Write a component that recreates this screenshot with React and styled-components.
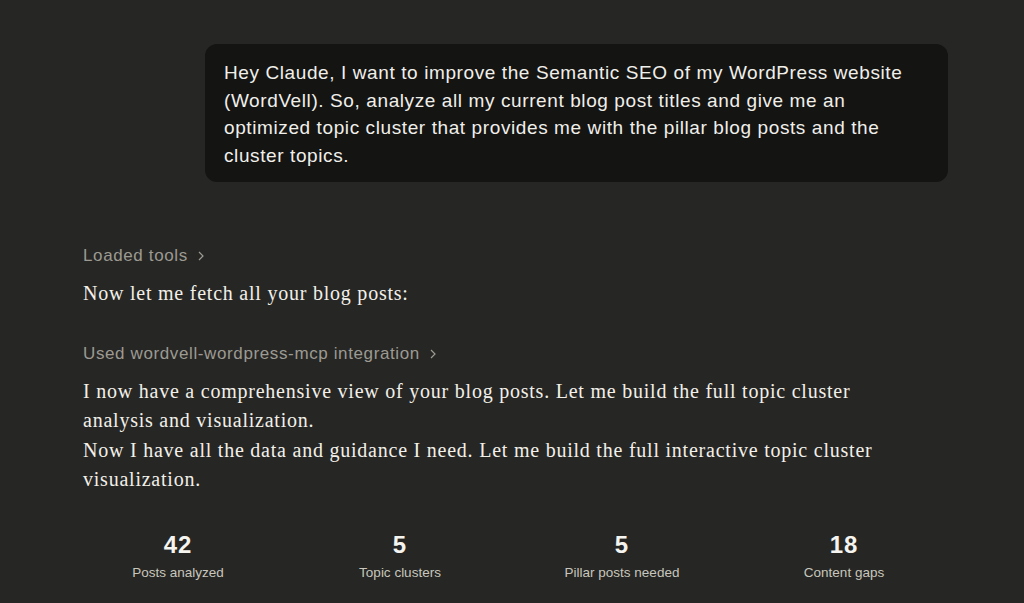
import React from "react";
import styled, { createGlobalStyle } from "styled-components";

const Global = createGlobalStyle`
	html, body { margin: 0; padding: 0; background: #262624; }
	body { width: 1024px; height: 603px; overflow: hidden; }
`;

const Page = styled.div`
	width: 1024px;
	height: 603px;
	background: #262624;
	padding-top: 44px;
	box-sizing: border-box;
`;

const Thread = styled.div`
	width: 888px;
	margin-left: 67px;
	display: flex;
	flex-direction: column;
`;

const UserRow = styled.div`
	display: flex;
	justify-content: flex-end;
	margin-right: 7px;
`;

const UserBubble = styled.div`
	width: 743px;
	box-sizing: border-box;
	background: #141413;
	border-radius: 12px;
	padding: 15px 19px 12px 19px;
	color: #f0efea;
	font-family: "Liberation Sans", Arial, sans-serif;
	font-size: 19px;
	letter-spacing: 0.6px;
	line-height: 27.7px;
`;

const Assistant = styled.div`
	padding: 0 16px;
	margin-top: 62px;
	display: flex;
	flex-direction: column;
`;

const ToolLine = styled.div`
	display: flex;
	align-items: center;
	gap: 8px;
	color: #9c9a92;
	font-family: "Liberation Sans", Arial, sans-serif;
	font-size: 17px;
	letter-spacing: 0.62px;
	line-height: 24px;
	margin-top: ${p => p.$top || 0}px;
`;

const Prose = styled.p`
	margin: ${p => p.$top || 0}px 0 0 0;
	max-width: 820px;
	color: #f2f0e9;
	font-family: "Liberation Serif", "Times New Roman", serif;
	font-size: 20px;
	letter-spacing: 0.77px;
	line-height: 29.3px;
`;

const Stats = styled.div`
	display: grid;
	grid-template-columns: repeat(4, 1fr);
	margin-top: 36px;
`;

const Stat = styled.div`
	display: flex;
	flex-direction: column;
	align-items: center;
	font-family: "Liberation Sans", Arial, sans-serif;
`;

const Num = styled.div`
	color: #f5f4ef;
	font-size: 24px;
	font-weight: 700;
	letter-spacing: 1px;
	line-height: 30px;
`;

const Label = styled.div`
	color: #c8c6bd;
	font-size: 13.5px;
	line-height: 18px;
	margin-top: 4px;
`;

const Chevron = () => (
	<svg width="10" height="12" viewBox="0 0 10 12" fill="none" stroke="currentColor" strokeWidth="1.2">
		<path d="M3 2 L7 6 L3 10" />
	</svg>
);

const stats = [
	["42", "Posts analyzed"],
	["5", "Topic clusters"],
	["5", "Pillar posts needed"],
	["18", "Content gaps"],
];

export default function App() {
	return (
		<Page>
			<Global />
			<Thread>
				<UserRow>
					<UserBubble>
						Hey Claude, I want to improve the Semantic SEO of my WordPress website (WordVell). So, analyze all my current blog post titles and give me an optimized topic cluster that provides me with the pillar blog posts and the cluster topics.
					</UserBubble>
				</UserRow>
				<Assistant>
					<ToolLine>Loaded tools <Chevron /></ToolLine>
					<Prose $top={11}>Now let me fetch all your blog posts:</Prose>
					<ToolLine $top={34}>Used wordvell-wordpress-mcp integration <Chevron /></ToolLine>
					<Prose $top={11}>
						I now have a comprehensive view of your blog posts. Let me build the full topic cluster analysis and visualization.
						<br />
						Now I have all the data and guidance I need. Let me build the full interactive topic cluster visualization.
					</Prose>
				</Assistant>
				<Stats>
					{stats.map(([n, l]) => (
						<Stat key={l}>
							<Num>{n}</Num>
							<Label>{l}</Label>
						</Stat>
					))}
				</Stats>
			</Thread>
		</Page>
	);
}
